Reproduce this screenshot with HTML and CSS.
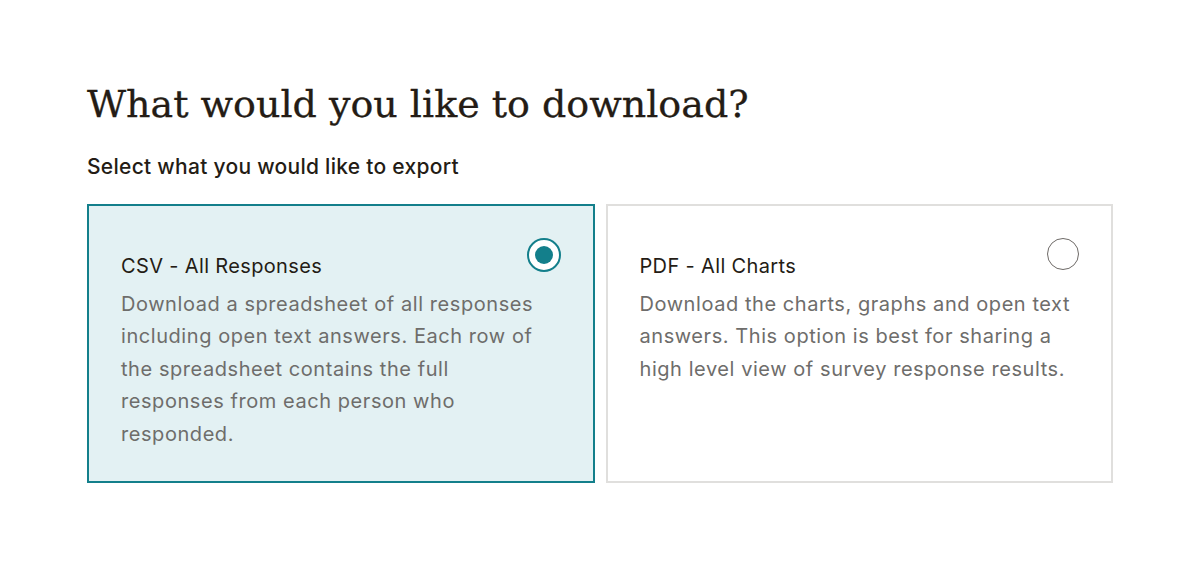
FILE: index.html
```html
<!DOCTYPE html>
<html lang="en">
<head>
<meta charset="utf-8">
<title>Download</title>
<link rel="stylesheet" href="styles.css">
</head>
<body>
<main class="page">
  <h1 class="title">What would you like to download?</h1>
  <p class="subtitle">Select what you would like to export</p>
  <div class="options">
    <label class="option option--selected">
      <div class="option__body">
        <div class="option__name">CSV - All Responses</div>
        <div class="option__desc">Download a spreadsheet of all responses including open text answers. Each row of the spreadsheet contains the full responses from each person who responded.</div>
      </div>
      <span class="radio radio--on"><span class="radio__dot"></span></span>
    </label>
    <label class="option">
      <div class="option__body">
        <div class="option__name">PDF - All Charts</div>
        <div class="option__desc">Download the charts, graphs and open text answers. This option is best for sharing a high level view of survey response results.</div>
      </div>
      <span class="radio"></span>
    </label>
  </div>
</main>
</body>
</html>
```
FILE: styles.css
```css
html, body {
  margin: 0;
  padding: 0;
  background: #ffffff;
}

.page {
  padding: 76px 87px 0 87px;
  font-family: "Inter", "Liberation Sans", sans-serif;
  color: #241c15;
}

.title {
  margin: 0;
  font-family: "DejaVu Serif", "Liberation Serif", serif;
  font-weight: 400;
  font-size: 38px;
  line-height: 56px;
  letter-spacing: 0;
  color: #241c15;
  -webkit-text-stroke: 0.3px #241c15;
}

.subtitle {
  margin: 21px 0 0 0;
  font-size: 21px;
  line-height: 28px;
  font-weight: 500;
  letter-spacing: 0.28px;
  color: #241c15;
}

.options {
  margin-top: 23px;
  display: grid;
  grid-template-columns: 1fr 1fr;
  column-gap: 11px;
  width: 1026px;
}

.option {
  position: relative;
  display: block;
  padding: 32px 32px 31px 32px;
  border: 2px solid #e0dfdd;
  background: #ffffff;
  cursor: pointer;
}

.option--selected {
  border: 2px solid #137f8b;
  background: #e3f1f3;
}

.option__body {
  padding-top: 12px;
}

.option__name {
  font-size: 20px;
  line-height: 32px;
  letter-spacing: 0.35px;
  color: #241c15;
}

.option__desc {
  margin-top: 5.5px;
  margin-right: 6px;
  font-size: 20px;
  line-height: 32.5px;
  letter-spacing: 0.56px;
  color: #6e6d6b;
}

.radio {
  position: absolute;
  top: 32px;
  right: 32px;
  width: 30px;
  height: 30px;
  border: 1.5px solid #6e6a67;
  border-radius: 50%;
  background: #ffffff;
  display: flex;
  align-items: center;
  justify-content: center;
}

.radio--on {
  border: 2px solid #137f8b;
}

.radio__dot {
  width: 18px;
  height: 18px;
  border-radius: 50%;
  background: #137f8b;
}
```
